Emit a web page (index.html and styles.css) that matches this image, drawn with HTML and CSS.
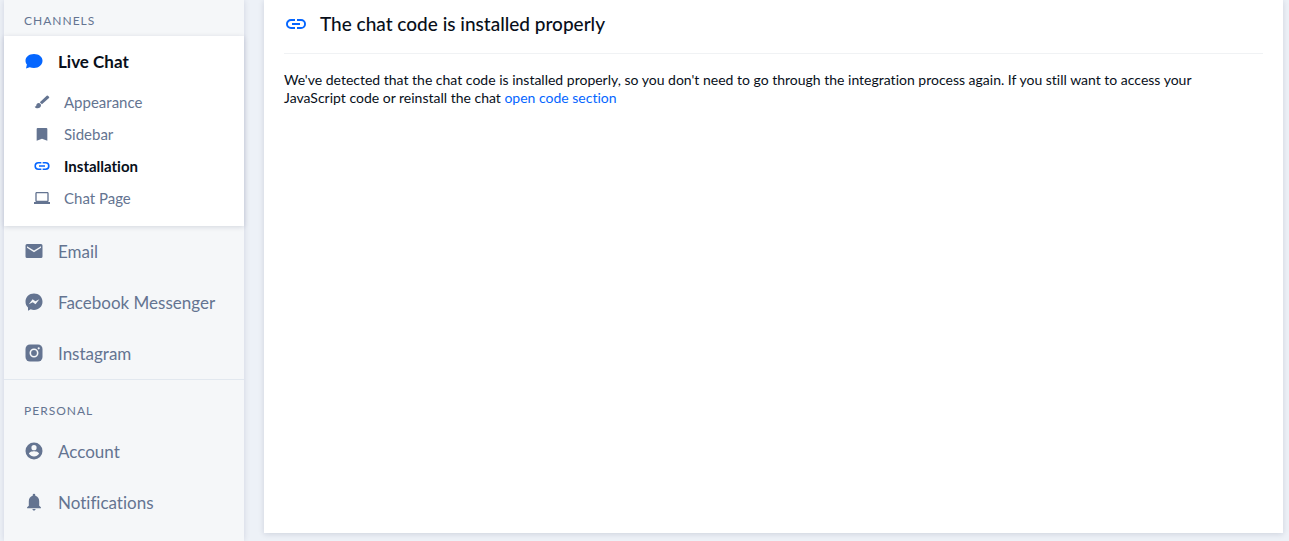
FILE: index.html
```html
<!DOCTYPE html>
<html lang="en">
<head>
<meta charset="utf-8">
<meta name="viewport" content="width=device-width, initial-scale=1">
<title>Installation</title>
<link rel="stylesheet" href="styles.css">
</head>
<body>
<div class="layout">
  <nav class="sidebar" aria-label="Settings">
    <h2 class="group-title">CHANNELS</h2>
    <div class="group-open">
      <a class="item item-current" href="#live-chat">
        <svg class="icon" viewBox="0 0 20 20"><path fill="currentColor" d="M10 3C5 3 1.500 5.900 1.500 9.700c0 1.600.5 2.700 1.400 3.800L2 17.500l3.700-1.200c1.300.5 2.800.7 4.300.7 5 0 8.500-3.200 8.500-7.200S15 3 10 3z"/></svg>
        <span>Live Chat</span>
      </a>
      <ul class="sublist">
        <li><a class="subitem" href="#appearance">
          <svg class="subicon" viewBox="0 0 24 24"><path fill="currentColor" d="M7 13.500c-2 0-3.500 1.500-3.500 3.500 0 1.310-1.160 2-2.500 2 .92 1.500 2.600 2.500 4.500 2.500 2.700 0 5-1.900 5-4.500 0-2-1.500-3.500-3.500-3.500zM22.500 4.200l-1.700-1.700a1.200 1.200 0 0 0-1.700 0L8.700 12.200l3.200 3.200L22.500 5.900a1.200 1.200 0 0 0 0-1.700z"/></svg>
          <span>Appearance</span></a></li>
        <li><a class="subitem" href="#sidebar">
          <svg class="subicon" viewBox="0 0 24 24"><path fill="currentColor" d="M5.500 3h13A1.500 1.500 0 0 1 20 4.500V22L12 19l-8 3v-17.500A1.500 1.500 0 0 1 5.500 3z"/></svg>
          <span>Sidebar</span></a></li>
        <li><a class="subitem subitem-current" href="#installation" aria-current="page">
          <svg class="subicon" viewBox="0 0 24 24"><path fill="currentColor" d="M3 12c0-2 1.600-3.600 3.600-3.600H11V6H6.600a6 6 0 0 0 0 12H11v-2.400H6.600C4.600 15.600 3 14 3 12zM7.500 13.200h9v-2.400h-9v2.400zM17.400 6H13v2.400h4.400a3.600 3.600 0 0 1 0 7.200H13V18h4.400a6 6 0 0 0 0-12z"/></svg>
          <span>Installation</span></a></li>
        <li><a class="subitem" href="#chat-page">
          <svg class="subicon" viewBox="0 0 24 24"><path fill="currentColor" d="M20 18c1.100 0 2-.9 2-2V5c0-1.100-.9-2-2-2H4c-1.100 0-2 .9-2 2v11c0 1.100.9 2 2 2H0v3h24v-3h-4zM4 5h16v11H4V5z"/></svg>
          <span>Chat Page</span></a></li>
      </ul>
    </div>
    <a class="item" href="#email">
      <svg class="icon" viewBox="0 0 20 20"><path fill="currentColor" fill-rule="evenodd" d="M3 3h14a1.500 1.500 0 0 1 1.500 1.500v11A1.500 1.500 0 0 1 17 17H3a1.500 1.500 0 0 1-1.500-1.500v-11A1.500 1.500 0 0 1 3 3zm0 2.200v1.600l7 4.500 7-4.500V5.200L10 9.600z"/></svg>
      <span>Email</span>
    </a>
    <a class="item" href="#messenger">
      <svg class="icon" viewBox="0 0 20 20"><path fill="currentColor" fill-rule="evenodd" d="M10 1.500c-4.800 0-8.500 3.500-8.500 8.200 0 2.300.9 4.300 2.500 5.800v3.300l2.700-1.500c1 .4 2.100.6 3.300.6 4.800 0 8.500-3.500 8.500-8.200S14.800 1.500 10 1.500zM4.800 12.300l3.800-5 2.800 2 4-2-3.900 5-2.700-2z"/></svg>
      <span>Facebook Messenger</span>
    </a>
    <a class="item" href="#instagram">
      <svg class="icon" viewBox="0 0 20 20"><rect x="1.500" y="1.500" width="17" height="17" rx="4.500" fill="currentColor"/><circle cx="10" cy="10" r="3.700" fill="none" stroke="#f5f7f9" stroke-width="1.600"/><circle cx="14.700" cy="5.300" r="1.100" fill="#f5f7f9"/></svg>
      <span>Instagram</span>
    </a>
    <h2 class="group-title group-divided">PERSONAL</h2>
    <a class="item" href="#account">
      <svg class="icon" viewBox="0 0 20 20"><circle cx="10" cy="10" r="8.500" fill="currentColor"/><circle cx="10" cy="6.700" r="2.600" fill="#f5f7f9"/><path fill="#f5f7f9" d="M4.900 12.800c.1-1.700 3.400-2.500 5.100-2.500s5 .8 5.100 2.500a6.200 6.200 0 0 1-10.200 0z"/></svg>
      <span>Account</span>
    </a>
    <a class="item" href="#notifications">
      <svg class="icon" viewBox="0 0 20 20"><path fill="currentColor" d="M10 18.500c.9 0 1.600-.6 1.600-1.500H8.400c0 .9.700 1.500 1.600 1.500zM15.200 13.800V9.200c0-2.700-1.400-4.800-3.900-5.400V3a1.300 1.300 0 0 0-2.600 0v.8C6.200 4.400 4.800 6.500 4.800 9.200v4.600L3.100 15.300v.9h13.800v-.9z"/></svg>
      <span>Notifications</span>
    </a>
  </nav>
  <main class="card">
    <header class="card-head">
      <svg class="head-icon" viewBox="0 0 24 24"><path fill="currentColor" d="M3.900 12c0-1.710 1.390-3.100 3.100-3.100h4V7H7a5 5 0 0 0 0 10h4v-1.900H7c-1.710 0-3.100-1.390-3.100-3.100zM8 13h8v-2H8v2zm9-6h-4v1.900h4a3.100 3.100 0 0 1 0 6.200h-4V17h4a5 5 0 0 0 0-10z"/></svg>
      <h1 class="card-title">The chat code is installed properly</h1>
    </header>
    <p class="card-text">We've detected that the chat code is installed properly, so you don't need to go through the integration process again. If you still want to access your JavaScript code or reinstall the chat <a class="link" href="#code">open code section</a></p>
  </main>
</div>
</body>
</html>
```

FILE: styles.css
```css
* {
  box-sizing: border-box;
}

body {
  margin: 0;
  background: #edf1f7;
  color: #080f1a;
  font-family: Lato, "Open Sans", sans-serif;
  font-variant-ligatures: none;
}

.layout {
  display: flex;
  gap: 20px;
  min-height: 100vh;
  padding: 0 6px 0 4px;
}

.sidebar {
  flex: 0 0 240px;
  background: #f5f7f9;
  box-shadow: 0 0 6px rgba(0, 20, 60, 0.12);
}

.group-title {
  margin: 0;
  padding: 13px 20px 7px;
  color: #647491;
  font-size: 12px;
  line-height: 16px;
  font-weight: 400;
  letter-spacing: 1px;
}

.group-divided {
  padding-top: 23px;
  border-top: 1px solid #e2e8ef;
}

.group-open {
  padding-bottom: 12px;
  background: #fff;
  box-shadow: 0 1px 5px rgba(0, 20, 60, 0.14);
}

.item {
  display: flex;
  align-items: center;
  gap: 14px;
  height: 51px;
  padding: 0 20px 1px;
  color: #647491;
  font-size: 17px;
  line-height: 21px;
  text-decoration: none;
}

.item-current {
  height: 50px;
  padding-bottom: 0;
  font-weight: 700;
}

.item-current span,
.subitem-current span {
  color: #080f1a;
}

.item-current .icon,
.subitem-current .subicon {
  color: #0566ff;
}

.icon {
  flex: none;
  width: 20px;
  height: 20px;
}

.sublist {
  margin: 0;
  padding: 0;
  list-style: none;
}

.subitem {
  display: flex;
  align-items: center;
  gap: 14px;
  height: 32px;
  padding: 0 20px 1px 30px;
  color: #647491;
  font-size: 15px;
  line-height: 18px;
  text-decoration: none;
}

.subitem-current {
  font-weight: 700;
}

.subicon {
  flex: none;
  width: 16px;
  height: 16px;
}

.card {
  flex: 1;
  min-width: 0;
  margin-bottom: 8px;
  padding: 0 20px 20px;
  background: #fff;
  box-shadow: 0 1px 6px rgba(0, 20, 60, 0.14);
}

.card-head {
  display: flex;
  align-items: center;
  gap: 12px;
  padding: 12px 0 17px;
  border-bottom: 1px solid #f0f2f4;
}

.head-icon {
  flex: none;
  width: 24px;
  height: 24px;
  color: #0566ff;
}

.card-title {
  margin: 0;
  font-size: 19px;
  line-height: 22px;
  font-weight: 500;
}

.card-text {
  margin: 17px 0 0;
  padding-right: 20px;
  font-size: 14px;
  line-height: 18px;
}

.link {
  color: #0566ff;
  text-decoration: none;
}
```
